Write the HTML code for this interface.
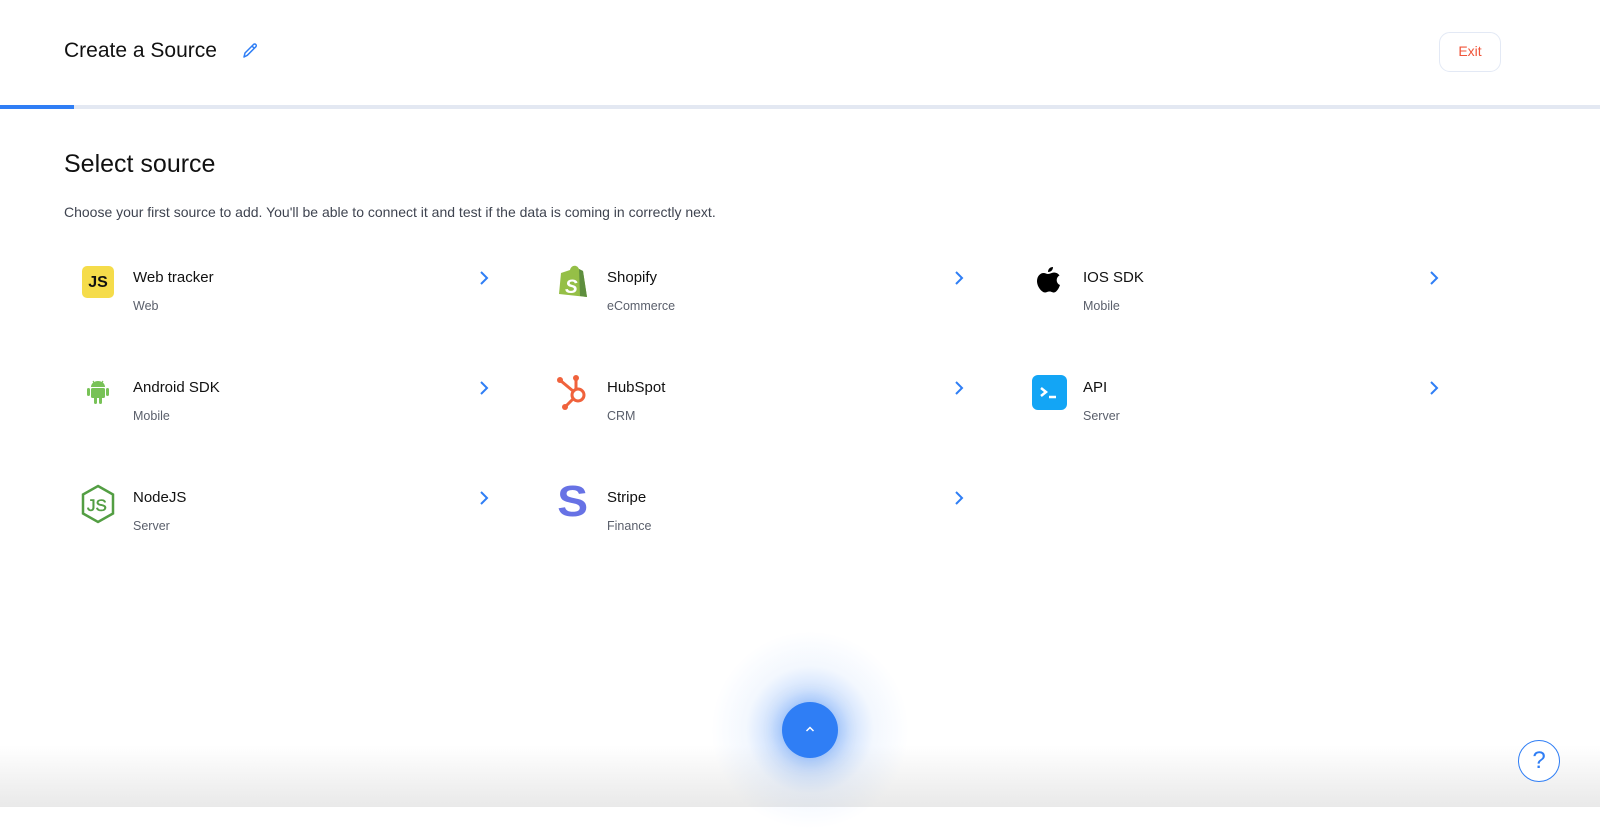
<!DOCTYPE html>
<html><head><meta charset="utf-8"><style>
*{margin:0;padding:0;box-sizing:border-box}
body{width:1600px;height:807px;overflow:hidden;background:#fff;font-family:"Liberation Sans",sans-serif;position:relative;color:#111}
.abs{position:absolute}
.t{position:absolute;font-size:15px;color:#111;white-space:nowrap}
.s{position:absolute;font-size:12.5px;color:#5a5f6b;white-space:nowrap}
.arr{position:absolute;width:12px;height:16px}
</style></head><body>
<div class="abs" style="left:64px;top:39px;font-size:21px;color:#111">Create a Source</div>
<svg class="abs" style="left:241px;top:42px" width="18" height="18" viewBox="0 0 18 18" fill="none" stroke="#2f7ef5" stroke-width="1.5" stroke-linejoin="round"><path d="M3 15l1-4 8.5-8.5a1.6 1.6 0 0 1 2.3 2.3L6.3 13.3z M11 4l2.5 2.5"/></svg>
<div class="abs" style="left:1439px;top:32px;width:62px;height:40px;border:1.5px solid #e3e9f5;border-radius:11px;color:#f0553a;font-size:14px;text-align:center;line-height:37px">Exit</div>
<div class="abs" style="left:0;top:105px;width:1600px;height:4px;background:#e3e8f2"></div>
<div class="abs" style="left:0;top:105px;width:74px;height:4px;background:#2f7ef5"></div>
<div class="abs" style="left:64px;top:150px;font-size:25px;color:#111">Select source</div>
<div class="abs" style="left:64px;top:204px;font-size:14px;color:#3f4450">Choose your first source to add. You'll be able to connect it and test if the data is coming in correctly next.</div>

<div class="abs" style="left:82px;top:266px;width:32px;height:32px;background:#f5dc4a;border-radius:5px;font-weight:bold;font-size:16px;text-align:center;line-height:33px;color:#111">JS</div>
<div class="t" style="left:133px;top:269px">Web tracker</div><div class="s" style="left:133px;top:299px">Web</div>
<svg class="arr" style="left:478px;top:270px" viewBox="0 0 12 16"><path d="M3 2l6 6-6 6" fill="none" stroke="#2f7ef5" stroke-width="2"/></svg>

<svg class="abs" style="left:557px;top:263px" width="34" height="36" viewBox="0 0 34 36"><path d="M4 10l9-3c1-5 7-6 9-1l4 2 4 26L2 31z" fill="#95bf47"/><path d="M22 6l4 2 4 26-7-1z" fill="#5e8e3e"/><text x="8" y="30" font-family="Liberation Sans" font-weight="bold" font-style="italic" font-size="19" fill="#fff">S</text></svg>
<div class="t" style="left:607px;top:269px">Shopify</div><div class="s" style="left:607px;top:299px">eCommerce</div>
<svg class="arr" style="left:953px;top:270px" viewBox="0 0 12 16"><path d="M3 2l6 6-6 6" fill="none" stroke="#2f7ef5" stroke-width="2"/></svg>

<svg class="abs" style="left:1034px;top:266px" width="28" height="32" viewBox="0 0 28 32"><path d="M19 1c0 3-2 5-5 5 0-3 2-5 5-5z" fill="#000"/><path d="M14 8c2 0 4-1.5 6-1.5 3 0 5 2 5.5 3-4 2-3.5 8 0.5 9.5-1 3-3.5 7.5-6 7.5-2 0-2.5-1-4.5-1s-3 1-4.5 1C8 26.5 3 21 3 15c0-5 3.5-8 6.5-8 2 0 3 1 4.5 1z" fill="#000"/></svg>
<div class="t" style="left:1083px;top:269px">IOS SDK</div><div class="s" style="left:1083px;top:299px">Mobile</div>
<svg class="arr" style="left:1428px;top:270px" viewBox="0 0 12 16"><path d="M3 2l6 6-6 6" fill="none" stroke="#2f7ef5" stroke-width="2"/></svg>

<svg class="abs" style="left:86px;top:378px" width="24" height="28" viewBox="0 0 24 28"><path d="M5 9a7 6 0 0 1 14 0z" fill="#78c257"/><path d="M7 3l2 3M17 3l-2 3" stroke="#78c257" stroke-width="1.2"/><rect x="5" y="10" width="14" height="10" rx="1.5" fill="#78c257"/><rect x="1" y="10" width="3" height="8" rx="1.5" fill="#78c257"/><rect x="20" y="10" width="3" height="8" rx="1.5" fill="#78c257"/><rect x="8" y="19" width="3" height="7" rx="1.5" fill="#78c257"/><rect x="13" y="19" width="3" height="7" rx="1.5" fill="#78c257"/></svg>
<div class="t" style="left:133px;top:379px">Android SDK</div><div class="s" style="left:133px;top:409px">Mobile</div>
<svg class="arr" style="left:478px;top:380px" viewBox="0 0 12 16"><path d="M3 2l6 6-6 6" fill="none" stroke="#2f7ef5" stroke-width="2"/></svg>

<svg class="abs" style="left:556px;top:373px" width="36" height="40" viewBox="0 0 36 40"><g stroke="#f0623c" stroke-width="3" fill="none"><circle cx="22" cy="22" r="6"/><path d="M20 16V6M17 18L5 8M17 26l-7 7"/></g><circle cx="20" cy="5" r="3" fill="#f0623c"/><circle cx="4" cy="7" r="3" fill="#f0623c"/><circle cx="9" cy="34" r="3" fill="#f0623c"/></svg>
<div class="t" style="left:607px;top:379px">HubSpot</div><div class="s" style="left:607px;top:409px">CRM</div>
<svg class="arr" style="left:953px;top:380px" viewBox="0 0 12 16"><path d="M3 2l6 6-6 6" fill="none" stroke="#2f7ef5" stroke-width="2"/></svg>

<div class="abs" style="left:1032px;top:375px;width:35px;height:35px;background:#13a5f5;border-radius:6px"></div>
<svg class="abs" style="left:1032px;top:375px" width="35" height="35" viewBox="0 0 35 35"><path d="M9 13l5 4-5 4" fill="none" stroke="#fff" stroke-width="2.5"/><path d="M17 22h7" stroke="#fff" stroke-width="2.5"/></svg>
<div class="t" style="left:1083px;top:379px">API</div><div class="s" style="left:1083px;top:409px">Server</div>
<svg class="arr" style="left:1428px;top:380px" viewBox="0 0 12 16"><path d="M3 2l6 6-6 6" fill="none" stroke="#2f7ef5" stroke-width="2"/></svg>

<svg class="abs" style="left:80px;top:484px" width="36" height="40" viewBox="0 0 36 40"><path d="M18 2l15 8.5v19L18 38 3 29.5v-19z" fill="none" stroke="#539e43" stroke-width="2.5"/><text x="7" y="27" font-family="Liberation Sans" font-size="17" fill="#539e43" stroke="#539e43" stroke-width="0.5">JS</text></svg>
<div class="t" style="left:133px;top:489px">NodeJS</div><div class="s" style="left:133px;top:519px">Server</div>
<svg class="arr" style="left:478px;top:490px" viewBox="0 0 12 16"><path d="M3 2l6 6-6 6" fill="none" stroke="#2f7ef5" stroke-width="2"/></svg>

<div class="abs" style="left:558px;top:478px;font-size:44px;font-weight:bold;color:#6772e5;line-height:48px;transform:scaleX(1.05)">S</div>
<div class="t" style="left:607px;top:489px">Stripe</div><div class="s" style="left:607px;top:519px">Finance</div>
<svg class="arr" style="left:953px;top:490px" viewBox="0 0 12 16"><path d="M3 2l6 6-6 6" fill="none" stroke="#2f7ef5" stroke-width="2"/></svg>

<div class="abs" style="left:0;top:745px;width:1600px;height:62px;background:linear-gradient(rgba(255,255,255,0),#e9e9e9)"></div>
<div class="abs" style="left:710px;top:630px;width:200px;height:200px;border-radius:50%;background:radial-gradient(circle,rgba(47,126,245,0.25) 25%,rgba(47,126,245,0.06) 45%,rgba(255,255,255,0) 70%)"></div>
<div class="abs" style="left:782px;top:702px;width:56px;height:56px;border-radius:50%;background:#2f7ef5;box-shadow:0 0 16px rgba(47,126,245,0.5)"></div>
<svg class="abs" style="left:804px;top:724px" width="12" height="10" viewBox="0 0 12 10"><path d="M2.5 7L6 3.5 9.5 7" fill="none" stroke="#fff" stroke-width="1.5"/></svg>
<div class="abs" style="left:1518px;top:740px;width:42px;height:42px;border-radius:50%;border:1.5px solid #2f7ef5;background:#fff;color:#2f7ef5;font-size:24px;text-align:center;line-height:40px">?</div>
</body></html>
